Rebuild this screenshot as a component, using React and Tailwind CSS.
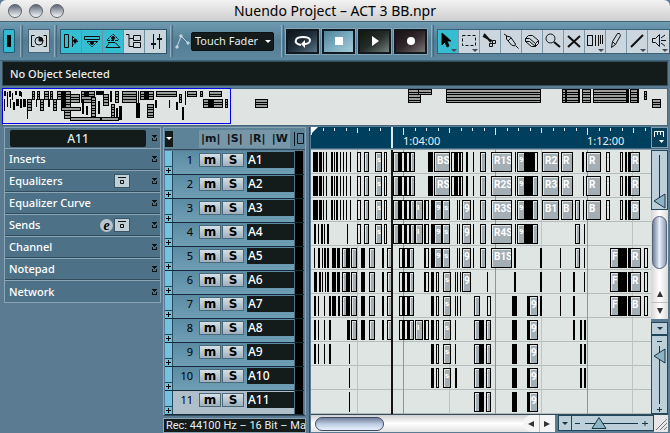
import { useState } from 'react';

const PANELS = [
  { name: 'Inserts' },
  { name: 'Equalizers', bypass: true },
  { name: 'Equalizer Curve' },
  { name: 'Sends', edit: true, bypass: true },
  { name: 'Channel' },
  { name: 'Notepad' },
  { name: 'Network' },
];

const TRACKS = ['A1', 'A2', 'A3', 'A4', 'A5', 'A6', 'A7', 'A8', 'A9', 'A10', 'A11'];

// [x, width] is a solid sliver, [x, width, label] is an open clip
const INTRO = [[2, 5], [8, 3], [12, 1], [15, 1], [20, 2], [23, 1], [25, 2], [29, 1], [32, 1], [35, 1], [39, 1]];
const VERSE = [[46, 4, ''], [53, 5, ''], [64, 7, 's'], [73, 3, '']];
const FILL = [[82, 6, ''], [88, 3], [90, 4, ''], [94, 1], [95, 4, ''], [99, 5, '']];
const FILL_B = [[88, 4, ''], [92, 2], [93, 4, ''], [97, 2], [98, 5, '']];
const MID_A = [[117, 5], [140, 4, ''], [144, 2], [146, 3, ''], [149, 3, ''], [155, 2], [162, 1], [169, 6, '']];
const MID_B = [[113, 2], [114, 4, ''], [120, 3], [123, 8, '9'], [131, 8, 's'], [146, 1], [148, 1], [151, 9, '9'], [162, 1], [169, 6, '']];
const LOW = [[31, 5, ''], [36, 3], [40, 6, ''], [50, 4], [58, 6, ''], [71, 2], [76, 5, '']];
const END_A = [[295, 4, ''], [309, 3, ''], [314, 2], [317, 2]];
const END_B = [[299, 9, 'F'], [308, 3], [311, 5], [317, 2], [333, 4, '']];
const CHOIR = [[120, 3], [125, 3, ''], [132, 8, 's']];
const OUTRO = [[163, 6, ''], [168, 5], [175, 5, ''], [201, 5], [216, 3], [218, 9, '9']];

const LANES = [
  [...INTRO, ...VERSE, ...FILL, ...MID_A, ...END_A, [123, 16, 'BS'], [180, 21, 'R1S'], [204, 1], [206, 8, '9'], [214, 9], [223, 4, ''], [231, 17, 'R2'], [250, 12, 'R'], [271, 2], [275, 15, 'R'], [319, 10, 'R']],
  [...INTRO, ...VERSE, ...FILL, ...MID_A, ...END_A, [123, 16, 'RS'], [180, 21, 'R2S'], [204, 1], [206, 8, '9'], [214, 7], [221, 6, ''], [231, 17, 'R3'], [250, 12, 'R'], [272, 1], [275, 15, 'R'], [319, 10, 'R']],
  [...INTRO, ...VERSE, ...FILL, ...MID_B, ...END_A, [104, 8, 'I'], [180, 21, 'R3S'], [204, 1], [206, 8, '9'], [214, 7], [221, 6, ''], [231, 17, 'B1'], [250, 12, 'B'], [264, 5, ''], [272, 1], [275, 15, 'B'], [319, 10, 'B']],
  [[3, 2], [7, 1], [10, 2], [13, 1], [16, 2], [36, 1], ...VERSE, ...FILL, ...MID_B, [104, 8, 'I'], [180, 21, 'R4S'], [204, 1], [206, 8, '9'], [214, 7], [221, 6, ''], [264, 5, ''], [273, 1]],
  [[3, 1], [7, 2], [11, 1], [13, 2], [16, 2], [21, 4], [26, 3], ...LOW, ...FILL_B, ...MID_B, [180, 21, 'B1S'], [203, 2], [229, 2], [249, 1], [264, 5, ''], [273, 1], ...END_B, [319, 11, 'R']],
  [[3, 3], [8, 2], [11, 1], [14, 1], [16, 2], [21, 4], [26, 3], ...LOW, ...FILL_B, [113, 2], [114, 4, ''], ...CHOIR, [144, 1], [146, 1], [149, 1], [151, 9, '9'], [176, 1], [203, 2], [229, 2], [249, 1], [262, 2], [273, 1], ...END_B, [319, 11, 'R']],
  [[3, 2], [7, 1], [13, 1], [18, 2], [21, 4], [27, 2], ...LOW, ...FILL_B, ...CHOIR, [144, 1], [146, 1], [149, 1], [163, 6, ''], [176, 4, ''], [201, 5], [216, 3], [218, 9, '9'], [229, 2], [249, 1], [262, 2], ...END_B, [319, 11, 'B']],
  [[3, 2], [7, 1], [13, 1], [18, 2], ...LOW.slice(1), ...FILL_B, [104, 8, 'I'], [113, 2], [114, 4, ''], ...CHOIR, [144, 1], ...OUTRO, [262, 2], [269, 2], [273, 2]],
  [[3, 2], [7, 1], [13, 1], [18, 2], [38, 1], ...CHOIR, [144, 1], ...OUTRO, [269, 2], [273, 2]],
  [[38, 1], ...CHOIR, [144, 2], ...OUTRO, [269, 2], [273, 2]],
  [[38, 1], ...OUTRO],
];

const GRID = [46, 92, 138, 184, 230, 276, 321];

// overview blocks: [x, y, width, rows]
const BLOCKS = [
  [32, 3, 3, 3], [37, 3, 3, 3], [44, 3, 5, 3], [50, 3, 3, 3], [57, 3, 14, 3], [64, 11, 7, 7], [70, 6, 10, 3],
  [81, 3, 14, 4], [91, 9, 5, 8], [103, 6, 6, 4], [115, 3, 4, 4], [122, 3, 15, 4], [140, 3, 14, 3], [156, 3, 21, 2],
  [187, 3, 10, 2], [200, 3, 3, 2], [209, 3, 13, 2], [203, 11, 20, 3], [225, 11, 3, 3], [27, 11, 5, 4],
  [40, 11, 4, 4], [53, 11, 4, 4], [61, 19, 20, 1], [70, 29, 49, 1], [111, 16, 4, 5], [147, 16, 7, 5],
  [179, 6, 3, 3], [255, 11, 13, 3], [408, 1, 13, 5], [418, 1, 14, 2], [446, 1, 95, 5], [562, 1, 18, 5],
  [582, 1, 9, 5], [593, 1, 36, 5], [630, 1, 9, 5], [644, 3, 3, 3], [652, 11, 9, 3],
];
const BARS = [
  [4, 3, 2, 5], [7, 4, 1, 11], [9, 3, 2, 6], [12, 5, 1, 7], [15, 3, 2, 4], [19, 3, 2, 5], [21, 4, 1, 5],
  [4, 11, 1, 12], [7, 13, 1, 6], [10, 11, 1, 9], [13, 14, 2, 8], [16, 11, 3, 7], [20, 11, 2, 9], [23, 11, 3, 8],
  [27, 11, 1, 20], [36, 11, 1, 8], [48, 11, 2, 8], [61, 4, 5, 15], [84, 3, 5, 6], [82, 11, 2, 15], [86, 18, 2, 9],
  [96, 3, 8, 4], [98, 13, 2, 13], [110, 3, 2, 11], [119, 18, 3, 14], [116, 20, 2, 10], [136, 15, 4, 15],
  [138, 3, 1, 13], [144, 3, 5, 8], [155, 12, 2, 8], [169, 12, 1, 8], [176, 14, 2, 8], [182, 19, 2, 13],
  [185, 3, 1, 14], [208, 11, 6, 8], [200, 3, 1, 5], [565, 1, 2, 14], [578, 1, 2, 14], [626, 1, 3, 14], [637, 1, 2, 14],
  [100, 29, 2, 4],
];

const TOOLS = [
  { name: 'Select', more: true, art: <path d="M3 1v12l3-3 2 5 2-1-2-5h4z" fill="#000" /> },
  { name: 'Range', more: true, art: <path d="M2.500 3.500h13v10h-13z" strokeDasharray="3 2" /> },
  { name: 'Split', art: <><path d="M2 4l9 5M3 2l7 8" strokeWidth="2" /><path d="M8.500 11.500h3v3h-3zM11.500 8.500h3v3h-3z" /></> },
  { name: 'Glue', art: <path d="M2 2l3 2M4.500 4l4 1 5 7-1 2-3-1-5-6zM9 6l-3 3M13.500 13.500l3 3" /> },
  { name: 'Erase', art: <path d="M2.500 6.500l3-3h4l6 5v3l-3 3h-4l-6-5zM2.500 6.500h4l6 5 3-3M12.500 11.500v3M2.500 9.500h4l6 5" /> },
  { name: 'Zoom', art: <><circle cx="6.500" cy="6.500" r="4.500" /><path d="M10 10l6 5" strokeWidth="2" /></> },
  { name: 'Mute', art: <path d="M3 4l12 11M15 4L3 15" strokeWidth="2" /> },
  { name: 'Time Warp', more: true, art: <path d="M1.500 3v11M1 3.500h5M1 13.500h5M6.500 3v11M9.500 3v11M12.500 3v11M14.500 3v9M16.500 3v9" /> },
  { name: 'Draw', art: <path d="M4.500 15.500l1-6 5-8 2 0 1 2-5 9zM5.500 9.500l3 3" /> },
  { name: 'Line', more: true, art: <path d="M3 15L15 3" strokeWidth="2" /> },
  { name: 'Play', more: true, art: <path d="M2.500 6.500h3l4-4v12l-4-4h-3zM11 8.500h5M11 6l4-3M11 11l4 3" /> },
];

const VIEWS = [
  { name: 'Show Inspector', on: true, art: <><path d="M2.500 2.500h4v13h-4zM10.500 4v11" /><path d="M11 5l5 4-5 4" strokeDasharray="2 1" /><circle cx="13" cy="9" r="1.500" fill="#000" /></> },
  { name: 'Show Infoline', on: true, art: <><path d="M1.500 4.500h15v3h-15zM4 9.500h11" /><path d="M4 10l5 5 5-5" strokeDasharray="2 1" /><circle cx="9" cy="11" r="1.500" fill="#000" /></> },
  { name: 'Show Overview', on: true, art: <><path d="M3 8l6-6 6 6M3 8.500h12" strokeDasharray="3 1" /><path d="M4 10.500h7l5 5H2l3-4" /><circle cx="9" cy="6" r="1.500" fill="#000" /></> },
  { name: 'Open Pool', art: <path d="M1 2.500h3v12h4M4 6.500h4M8.500 3.500h7v5h-7zM8.500 10.500h7v5h-7z" /> },
  { name: 'Open Mixer', art: <path d="M6.500 2v15M12.500 2v15M4 11.500h5M4 12.500h5M10 6.500h5M10 7.500h5" /> },
];

function Glyph({ w = 18, h = 18, children }) {
  return (
    <svg width={w} height={h} fill="none" stroke="#101010" aria-hidden="true" className="block shrink-0">
      {children}
    </svg>
  );
}

function TitleBar() {
  return (
    <header className="relative flex h-[21px] items-center justify-center rounded-t-md bg-linear-to-b from-[#f2f2f2] to-[#cfcfcf]">
      <div className="absolute left-2 flex gap-[7px]">
        {['Close', 'Minimize', 'Zoom window'].map((n) => (
          <button key={n} aria-label={n}
            className="size-[14px] rounded-full border border-[#5c626c] bg-linear-to-b from-[#5f6774] via-[#a9b0b8] to-[#f4f6f8]" />
        ))}
      </div>
      <h1 className="text-[14px] leading-5 text-black">Nuendo Project – ACT 3 BB.npr</h1>
    </header>
  );
}

function Divider() {
  return <div className="h-8 w-[3px] shrink-0 border-x border-l-[#8fb0c2] border-r-[#48697d]" />;
}

function Transport({ label, className, children }) {
  return (
    <button aria-label={label}
      className={`flex h-[25px] w-[33px] items-center justify-center border-2 border-[#101820] outline outline-[#84a5b5] ${className}`}>
      <svg width="20" height="16" fill="#fff" aria-hidden="true">{children}</svg>
    </button>
  );
}

function Toolbar() {
  const [tool, setTool] = useState('Select');
  return (
    <div className="flex h-[40px] items-center overflow-hidden border-y border-[#41647a] bg-linear-to-b from-[#6f9bb1] via-[#537d94] to-[#5d879e] pl-[3px]">
      <button aria-label="Activate project" className="flex h-6 w-3 shrink-0 items-center justify-center rounded-xs border border-[#205a70] bg-[#2ebcd2]">
        <span className="h-3 w-1 bg-black" />
      </button>
      <div className="mx-[5px]"><Divider /></div>
      <button aria-label="Constrain delay" className="flex h-6 w-[22px] shrink-0 items-center justify-center border border-[#466677] bg-[#c9d5dd]">
        <Glyph>
          <path d="M4.500 3.500h-3v11h3M13.500 3.500h3v11h-3" />
          <circle cx="9" cy="9" r="4" />
          <path d="M9 9V5a4 4 0 0 1 4 4z" fill="#101010" />
        </Glyph>
      </button>
      <div className="mx-1"><Divider /></div>
      <div className="flex shrink-0 outline outline-[#2d566b]">
        {VIEWS.map((v) => (
          <button key={v.name} aria-label={v.name}
            className={`flex h-[23px] w-[21px] items-center justify-center border-r border-[#6d8fa2] last:border-r-0 ${v.on ? 'bg-[#35bdd2]' : 'bg-[#c9d5dd]'}`}>
            <Glyph>{v.art}</Glyph>
          </button>
        ))}
      </div>
      <div className="ml-1 mr-[2px]"><Divider /></div>
      <svg width="15" height="17" fill="none" stroke="#c3d6df" className="shrink-0" aria-hidden="true">
        <path d="M2 14L6 3l7 7" /><path d="M1 13h2v2H1zM5 2h2v2H5zM12 9h2v2h-2z" fill="#c3d6df" />
      </svg>
      <div className="relative ml-px shrink-0">
        <select aria-label="Automation mode" className="block h-[19px] w-[83px] appearance-none rounded-xs border border-[#0a1114] bg-[#131b1b] pl-[3px] text-[11px] leading-4 text-[#e4ecec]">
          <option>Touch Fader</option>
        </select>
        <span className="pointer-events-none absolute right-[3px] top-[8px] border-x-3 border-t-3 border-x-transparent border-t-white" />
      </div>
      <div className="ml-[7px] mr-[2px]"><Divider /></div>
      <div className="flex shrink-0 gap-[3px]">
        <Transport label="Cycle" className="bg-linear-to-br from-[#0d151c] via-[#22303c] to-[#5c7587]">
          <path d="M8 12C3 11 2 9 3 7c1-4 13-4 14 0 0 2-2 4-5 4" fill="none" stroke="#fff" strokeWidth="2" /><path d="M8 11l4-4v8z" />
        </Transport>
        <Transport label="Stop" className="bg-linear-to-br from-[#4e829b] via-[#7babbf] to-[#a5cad8]">
          <path d="M6 4h8v8H6z" />
        </Transport>
        <Transport label="Play" className="bg-linear-to-br from-[#10170f] via-[#252d2a] to-[#78827d]">
          <path d="M7 3l7 5-7 5z" />
        </Transport>
        <Transport label="Record" className="bg-linear-to-br from-[#181012] via-[#30282b] to-[#807679]">
          <circle cx="10" cy="8" r="4" />
        </Transport>
      </div>
      <div className="mx-1"><Divider /></div>
      <div className="flex shrink-0 outline outline-[#3c6075]">
        {TOOLS.map((t) => (
          <button key={t.name} aria-label={t.name} onClick={() => setTool(t.name)}
            className={`relative flex h-[23px] w-[21px] items-center justify-center border-r border-[#7c98a8] last:border-r-0 ${tool === t.name ? 'bg-[#35bdd2]' : 'bg-[#cbd6de]'}`}>
            <Glyph>{t.art}</Glyph>
            {t.more && <span className="absolute bottom-px right-px border-x-3 border-t-3 border-x-transparent border-t-[#454a55]" />}
          </button>
        ))}
      </div>
    </div>
  );
}

const rowTop = (r) => Math.round((r * 8) / 3);

function Overview() {
  return (
    <section aria-label="Overview" className="relative mx-[2px] mt-[2px] h-[38px] border border-[#48687d] bg-[#dfe4e2]">
      <svg width="100%" height="36" className="block" shapeRendering="crispEdges" aria-hidden="true">
        {BLOCKS.map(([x, y, w, rows], i) => (
          <g key={i}>
            {Array.from({ length: rows }, (_, r) => (
              <rect key={r} x={x - 2.5} y={y - 0.5 + rowTop(r)} width={w - 1} height={rowTop(r + 1) - rowTop(r)} fill="#9a9d9b" stroke="#000" />
            ))}
          </g>
        ))}
        {BARS.map(([x, y, w, h], i) => <rect key={i} x={x - 3} y={y - 1} width={w} height={h} fill="#000" />)}
      </svg>
      <div className="absolute -left-px -top-px h-[36px] w-[229px] border border-[#0000e6]" />
    </section>
  );
}

function Fold() {
  return (
    <svg width="5" height="6" fill="#0d1518" shapeRendering="crispEdges" aria-hidden="true">
      <path d="M0 0h5v1H0zM1 1h3v1H1zM2 2h1v1H2zM0 3h1v2H0zM4 3h1v2H4zM0 5h5v1H0z" />
    </svg>
  );
}

function Bypass() {
  return (
    <button aria-label="Bypass" className="flex h-[14px] w-4 items-center justify-center border border-[#3b5564] bg-[#bfd0d8]">
      <svg width="8" height="8" fill="none" stroke="#111" aria-hidden="true"><path d="M0 .5h8M2.500 3.500h3v3h-3z" /></svg>
    </button>
  );
}

function Inspector() {
  return (
    <aside className="w-[157px] shrink-0 self-start border border-[#8ba5b5]">
      <div className="flex h-[20px] items-center bg-[#507286] pl-[5px]">
        <h2 className="h-[17px] w-[136px] rounded-xs bg-[#131b1b] text-center text-[12px] font-medium leading-[17px] text-[#dfe8e8]">A11</h2>
        <button aria-label="Track settings" className="ml-[6px]"><Fold /></button>
      </div>
      {PANELS.map((p) => (
        <div key={p.name} className="flex h-[22px] items-center gap-px border-b border-t border-b-[#304c5c] border-t-[#8ba5b5] bg-[#4d7186] pl-1 pr-[3px] last:border-b-0">
          <h3 className="mr-auto text-[11px] font-medium leading-4 text-white">{p.name}</h3>
          {p.edit && <button aria-label="Edit channel" className="size-[13px] rounded-full bg-[#bac5cb] font-['Liberation_Serif',serif] text-[14px] font-bold italic leading-[11px] text-black">e</button>}
          {p.bypass && <Bypass />}
          <button aria-label={`Open ${p.name}`} className={p.bypass ? 'ml-[21px]' : ''}><Fold /></button>
        </div>
      ))}
    </aside>
  );
}

function Track({ name, index, selected }) {
  const btn = "h-[14px] w-[22px] border border-[#4b6878] bg-linear-to-b from-[#d6e0e6] to-[#9db0bb] text-center font-['DejaVu_Sans',sans-serif] text-[12px] font-bold leading-[11px] text-black";
  return (
    <li className={`flex h-6 border-b border-[#172a35] ${selected ? 'bg-[#aebfca]' : 'bg-linear-to-b from-[#5a8ba2] to-[#6f9fb5]'}`}>
      <div className="flex w-2 shrink-0 flex-col justify-end border-r border-[#264a5c] bg-[#76c1e0]">
        <button aria-label={`Expand ${name}`} className="flex h-2 items-center justify-center border-t border-[#264a5c]">
          <svg width="5" height="5" stroke="#000" aria-hidden="true"><path d="M0 2.500h5M2.500 0v5" /></svg>
        </button>
      </div>
      <span className="w-5 shrink-0 pt-px text-right text-[11px] leading-4 text-black">{index + 1}</span>
      <div className="ml-[6px] flex gap-px pt-[2px]">
        <button aria-label={`Mute ${name}`} className={btn}>m</button>
        <button aria-label={`Solo ${name}`} className={btn}>S</button>
      </div>
      <input aria-label={`Name of track ${index + 1}`} defaultValue={name}
        className="ml-[3px] mt-px h-4 min-w-0 flex-1 bg-[#131b1b] pl-px text-[12px] font-medium leading-4 text-white" />
      <div className="w-[10px] shrink-0 border-x border-x-[#4f7487] bg-black" />
    </li>
  );
}

function TrackList() {
  return (
    <section aria-label="Tracks" className="ml-[2px] w-[143px] shrink-0 border border-[#8ba5b5] border-b-[#304c5c]">
      <div className="flex h-[22px] items-center border-b border-[#304c5c] bg-[#5d8398] pl-px">
        <button aria-label="Track presets" className="flex h-4 w-2 items-center justify-center bg-[#131b1b]">
          <span className="border-x-3 border-t-3 border-x-transparent border-t-white" />
        </button>
        <div className="ml-[26px] flex h-[18px] flex-1 items-center justify-between bg-[#7796a8] px-[2px] font-['DejaVu_Sans',sans-serif] text-[11px] font-bold leading-4 text-[#0c1418]">
          <button>|m|</button><button>|S|</button><button>|R|</button><button>|W</button>
        </div>
        <svg width="15" height="14" fill="none" stroke="#0c1418" aria-hidden="true"><path d="M4.500 0v14M7.500 1.500h6v10h-6z" /></svg>
      </div>
      <ul className="mx-px mt-px">
        {TRACKS.map((t, i) => <Track key={t} name={t} index={i} selected={i === 10} />)}
      </ul>
    </section>
  );
}

function Ruler() {
  return (
    <div className="flex h-[23px] border-b border-[#8ba5b5] bg-[#45657b]">
      <svg width="100%" height="21" className="min-w-0 flex-1 bg-[#00405f]" aria-label="Ruler">
        <g shapeRendering="crispEdges" fill="#dfe8ec">
          {Array.from({ length: 60 }, (_, i) => (
            <rect key={i} x={Math.round(i * 11.5)} y="1" width="1" height={i % 8 === 0 ? 7 : i % 4 === 0 ? 5 : 3} />
          ))}
          <rect x="80" width="2" height="21" />
        </g>
        <path d="M0 0h7L0 7z" fill="#fff" />
        <g fill="#e6eef0" fontSize="11">
          <text x="92" y="18">1:04:00</text>
          <text x="276" y="18">1:12:00</text>
        </g>
      </svg>
      <button aria-label="Time format" className="h-[21px] w-[17px] shrink-0 border border-[#7f9fb0] bg-[#083e59]">
        <svg width="15" height="19" fill="none" stroke="#fff" aria-hidden="true">
          <path d="M2.500 9V3.500h9M5.500 3v4M8.500 3v4M11.500 3v6" /><path d="M7 12h5l-2.500 3z" fill="#fff" stroke="none" />
        </svg>
      </button>
    </div>
  );
}

function Clip({ x, w, label }) {
  if (label === undefined) return <rect x={x} y="2" width={w} height="20" fill="#000" />;
  return (
    <g>
      <rect x={x} y="2" width={w} height="20" fill="#000" />
      <rect x={x + 1} y="3" width={w - 2} height="18" fill="#e1e6e5" />
      {w > 4 && <rect x={x + 2} y="4" width={w - 3} height="17" fill="#a3afb5" />}
      {label && (
        <text x={w > 12 ? x + 3 : x + 2} y={w > 8 ? 14 : 12} fontSize={w > 8 ? 10 : 8} fontWeight="bold" fill="#fff" className="font-['Roboto',sans-serif]">{label}</text>
      )}
      {w > 4 && <rect x={x + w - 1} y="2" width="1" height="20" fill="#000" />}
    </g>
  );
}

function Lane({ clips }) {
  return (
    <svg width="100%" height="24" className="block bg-[#dfe5e3]" shapeRendering="crispEdges">
      <rect y="23" width="100%" height="1" fill="#b5bcbc" />
      {GRID.map((x, i) => <rect key={x} x={x} width="1" height="24" fill={i % 2 ? '#8d9596' : '#bcc3c3'} />)}
      {clips.map(([x, w, label], i) => <Clip key={i} x={x} w={w} label={label} />)}
      <rect x="80" width="2" height="24" fill="#161310" />
    </svg>
  );
}

function VerticalZoom({ className, plus }) {
  return (
    <div className={`relative border border-[#22475a] bg-[#bdd0d9] ${className}`}>
      <svg width="15" height="100%" className="block" aria-hidden="true">
        {plus ? (
          <g fill="none" stroke="#183746">
            <path d="M5 5.500h5M7.500 10v58M5 73.500h5M7.500 71v5" />
            <path d="M2 20l11-7v14z" fill="#8eb3c3" />
          </g>
        ) : (
          <g fill="none" stroke="#183746">
            <path d="M7.500 4v48" /><path d="M2 50l11-7v14z" fill="#8eb3c3" />
          </g>
        )}
      </svg>
      <input type="range" aria-label={plus ? 'Vertical zoom' : 'Waveform zoom'}
        className="absolute inset-0 h-full w-full opacity-0 [writing-mode:vertical-lr]" />
    </div>
  );
}

function RightRail() {
  return (
    <div className="flex w-[17px] shrink-0 flex-col">
      <VerticalZoom className="h-[60px]" />
      <div className="flex flex-1 flex-col bg-linear-to-r from-[#d5d5d5] via-white to-[#dcdcdc] pt-[6px]">
        <div className="mx-px h-[53px] rounded-full border border-[#53617d] bg-linear-to-r from-[#72809b] via-[#eaf1fb] to-[#8c9ab3]" />
        <div className="mt-auto flex h-[33px] flex-col">
          <button aria-label="Scroll up" className="flex flex-1 items-center justify-center border-b border-[#c0c0c0]">
            <span className="border-x-3 border-b-6 border-x-transparent border-b-[#333]" />
          </button>
          <button aria-label="Scroll down" className="flex flex-1 items-center justify-center">
            <span className="border-x-3 border-t-6 border-x-transparent border-t-[#333]" />
          </button>
        </div>
      </div>
      <button aria-label="Vertical zoom presets" className="mt-[3px] flex h-[13px] items-center justify-center border border-[#22475a] bg-[#bdd0d9]">
        <span className="border-x-3 border-t-3 border-x-transparent border-t-[#183746]" />
      </button>
      <VerticalZoom className="h-[79px]" plus />
    </div>
  );
}

function BottomRail() {
  return (
    <div className="flex h-[17px]">
      <div className="flex min-w-0 flex-1 items-center bg-linear-to-b from-[#d0d0d0] via-white to-[#e2e2e2] pl-1">
        <div className="h-[14px] w-[69px] rounded-full border border-[#3c4a66] bg-linear-to-b from-[#72809b] via-[#bccbe2] to-[#e9f2fd]" />
        <div className="ml-auto flex h-full w-[32px] rounded-l-full bg-[#f4f4f4]">
          <button aria-label="Scroll left" className="flex flex-1 items-center justify-center">
            <span className="border-y-3 border-r-6 border-y-transparent border-r-[#333]" />
          </button>
          <button aria-label="Scroll right" className="flex flex-1 items-center justify-center border-l border-[#c0c0c0]">
            <span className="border-y-3 border-l-6 border-y-transparent border-l-[#333]" />
          </button>
        </div>
      </div>
      <button aria-label="Horizontal zoom presets" className="ml-[3px] flex h-4 w-[14px] items-center justify-center border border-[#22475a] bg-[#bdd0d9]">
        <span className="border-x-3 border-t-3 border-x-transparent border-t-[#183746]" />
      </button>
      <div className="relative h-4 w-[82px] border border-l-0 border-[#22475a] bg-[#bdd0d9]">
        <svg width="80" height="14" fill="none" stroke="#183746" className="block" aria-hidden="true">
          <path d="M3 7.500h5M13 7.500h53M70 7.500h6M73 5v5" /><path d="M27 1.500l7 11H20z" fill="#8eb3c3" />
        </svg>
        <input type="range" aria-label="Horizontal zoom" className="absolute inset-0 h-full w-full opacity-0" />
      </div>
      <svg width="14" height="17" fill="none" stroke="#777" className="bg-[#e6e6e6]" aria-hidden="true">
        <path d="M2 15L13 4M6 15l7-7M10 15l3-3" />
      </svg>
    </div>
  );
}

export default function App() {
  return (
    <div className="flex min-h-screen flex-col overflow-hidden bg-[#5b7b92] font-['Noto_Sans',sans-serif]">
      <TitleBar />
      <Toolbar />
      <p className="mx-[2px] h-[25px] border border-[#33505f] bg-[#131b1b] px-[7px] text-[11px] font-medium leading-[23px] text-[#e6eeee]">
        No Object Selected
      </p>
      <Overview />
      <main className="flex flex-1 pl-1 pt-px">
        <Inspector />
        <div className="flex shrink-0 flex-col">
          <TrackList />
          <p className="ml-[2px] mt-[2px] h-[15px] w-[143px] overflow-hidden whitespace-nowrap border border-[#8ba5b5] bg-[#131b1b] pl-[2px] font-['Roboto',sans-serif] text-[11px] leading-[13px] text-[#e6eeee]">
            Rec: 44100 Hz – 16 Bit – Max
          </p>
        </div>
        <div className="ml-[3px] mr-[2px] flex min-w-0 flex-1 flex-col border-l border-[#304c5c] pl-px">
          <Ruler />
          <div className="flex border-b border-[#304c5c]">
            <div className="min-w-0 flex-1">
              {LANES.map((clips, i) => <Lane key={i} clips={clips} />)}
            </div>
            <RightRail />
          </div>
          <BottomRail />
        </div>
      </main>
    </div>
  );
}
